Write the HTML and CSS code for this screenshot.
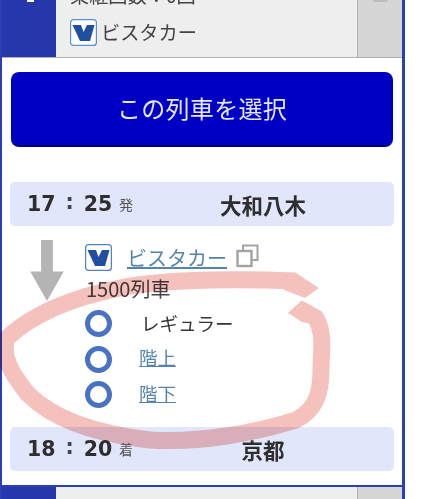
FILE: index.html
```html
<!DOCTYPE html>
<html lang="ja">
<head>
<meta charset="utf-8">
<title>列車の選択</title>
<link rel="stylesheet" href="styles.css">
</head>
<body>
<div class="frame">
  <div class="summary">
    <div class="num"><span class="num-mark"></span></div>
    <div class="info">
      <div class="info-line count">乗継回数：0回</div>
      <div class="info-line kind">
        <svg class="vista" viewBox="0 0 27 27"><rect x=".6" y=".6" width="25.8" height="25.8" rx="3" fill="#fff" stroke="#5b8fc9" stroke-width="1.2"/><path d="M2.5 6H24.5L20 22H10Z" fill="#1f4f9e"/><path d="M11 6H17L13.5 13Z" fill="#fff"/></svg>
        <span>ビスタカー</span>
      </div>
    </div>
    <div class="side"><span class="side-mark"></span></div>
  </div>
  <div class="select-wrap"><button class="select">この列車を選択</button></div>
  <div class="stop first">
    <span class="time">17<i>:</i>25</span><span class="dep">発</span><span class="station">大和八木</span>
  </div>
  <div class="leg">
    <div class="arrow-col">
      <svg class="arrow" viewBox="0 0 34 62"><path d="M11 0H23V32H34L17 62L0 32H11Z" fill="#b4b4b4"/></svg>
    </div>
    <div class="leg-body">
      <div class="train">
        <svg class="vista" viewBox="0 0 27 27"><rect x=".6" y=".6" width="25.8" height="25.8" rx="3" fill="#fff" stroke="#4f82c4" stroke-width="1.2"/><path d="M2.5 6H24.5L20 22H10Z" fill="#1f4f9e"/><path d="M11 6H17L13.5 13Z" fill="#fff"/></svg>
        <a class="train-link" href="#">ビスタカー</a>
        <svg class="copy" viewBox="0 0 23 24"><path d="M7 6V1.5H21.5V16H16" fill="none" stroke="#a3a3a3" stroke-width="2"/><rect x="1.5" y="7" width="14" height="15" fill="none" stroke="#a3a3a3" stroke-width="2.4"/></svg>
      </div>
      <div class="train-no">1500列車</div>
      <div class="seat"><span class="radio"></span><span class="seat-plain">レギュラー</span></div>
      <div class="seat"><span class="radio"></span><a class="seat-link" href="#">階上</a></div>
      <div class="seat"><span class="radio"></span><a class="seat-link" href="#">階下</a></div>
    </div>
  </div>
  <div class="stop last">
    <span class="time">18<i>:</i>20</span><span class="dep">着</span><span class="station">京都</span>
  </div>
</div>
<div class="next">
  <div class="num"></div>
  <div class="info"></div>
  <div class="side"></div>
</div>
<svg class="scribble" viewBox="0 0 426 499" width="426" height="499">
  <path d="M296 281C250 279 170 278 120 288C75 297 35 312 7 338C1 355 10 372 28 394C52 418 90 433 150 440C200 443 255 433 296 420C315 410 321 395 321 370C321 350 325 335 316 318L298 308" fill="none" stroke="#f0aca6" stroke-width="17" stroke-linecap="butt" stroke-linejoin="round"/>
  <path d="M286 273L296 273L319 288L305 298L284 290Z" fill="#f0aca6"/>
  <path d="M288 313L301 301L316 310L320 325L302 322Z" fill="#f0aca6"/>
</svg>
</body>
</html>
```
FILE: styles.css
```css
* { box-sizing: border-box; }
html, body { margin: 0; padding: 0; height: 499px; overflow: hidden; background: #fff; }
body {
  position: relative;
  width: 426px;
  font-family: "Noto Sans CJK JP", "Noto Sans", sans-serif;
  color: #333;
}
.frame {
  width: 405px;
  height: 487px;
  border-left: 2px solid #2a3fb5;
  border-right: 3px solid #2a3fb5;
  border-bottom: 2px solid #2a3fb5;
}
.summary {
  display: flex;
  height: 58px;
  border-bottom: 1px solid #b0b0b0;
}
.num {
  position: relative;
  width: 54px;
  background: #2738ad;
  flex: none;
}
.num-mark {
  display: block;
  width: 7px;
  height: 2px;
  margin-left: 25px;
  background: #fff;
}
.info {
  flex: 1;
  background: #eee;
  border-right: 1px solid #b0b0b0;
  display: flex;
  flex-direction: column;
  justify-content: flex-end;
  padding: 0 0 9px 14px;
  overflow: hidden;
}
.info-line {
  font-size: 19.2px;
  line-height: 34px;
  flex: none;
  white-space: nowrap;
  color: #444;
}
.count { margin-bottom: 4px; }
.kind { display: flex; align-items: center; gap: 4px; height: 32px; }
.side { width: 44px; flex: none; background: #d6d6d6; }
.side-mark {
  display: block;
  width: 15px;
  height: 2px;
  margin: 0 0 0 15px;
  background: #bdbdbd;
  border-radius: 0 0 8px 8px;
}
.vista { width: 27px; height: 27px; flex: none; }
.select-wrap { padding: 14px 9px 35px; }
.select {
  display: block;
  width: 382px;
  height: 75px;
  padding: 0 0 2px;
  border: 0;
  border-bottom: 2px solid #00007a;
  border-radius: 8px;
  background: #0000c4;
  color: #e6e6ff;
  font: 400 24px/1 "Noto Sans CJK JP", sans-serif;
  letter-spacing: .3px;
}
.stop {
  display: flex;
  align-items: center;
  width: 384px;
  height: 44px;
  margin-left: 8px;
  padding-left: 17px;
  background: #e1e6fb;
  border-radius: 5px;
  color: #2e2e2e;
}
.time {
  width: 83px;
  font: 700 20.5px/1 "DejaVu Sans", sans-serif;
  white-space: nowrap;
}
.time i { font-style: normal; margin: 0 10px; position: relative; top: -2px; color: #444; }
.dep { font-size: 14px; width: 109px; padding-left: 9px; color: #555; flex: none; }
.station {
  font-size: 21.5px;
  font-weight: 700;
  width: 88px;
  text-align: center;
  white-space: nowrap;
}
.leg {
  display: flex;
  height: 201px;
  padding-top: 14px;
}
.arrow-col { width: 83px; padding: 0 0 0 28px; flex: none; }
.arrow { display: block; width: 34px; height: 61px; }
.leg-body { flex: 1; }
.train { display: flex; align-items: center; height: 27px; margin-top: 4px; }
.train-link {
  margin-left: 15px;
  width: 102px;
  font-size: 20px;
  line-height: 27px;
  color: #5583ab;
  text-decoration: underline;
  text-underline-offset: 1px;
  white-space: nowrap;
}
.copy { width: 23px; height: 24px; margin: -3px 0 0 7px; }
.train-no { font-size: 20px; line-height: 36px; margin-left: 1px; color: #444; height: 35px; }
.seat { display: flex; align-items: center; height: 35.5px; }
.radio {
  width: 27px;
  height: 27px;
  flex: none;
  border: 5px solid #4a72c4;
  border-radius: 50%;
  background: #fff;
}
.seat-plain { margin-left: 29px; font-size: 18.5px; color: #333; padding-bottom: 2px; }
.seat-link {
  margin-left: 27px;
  margin-bottom: 4px;
  font-size: 18.5px;
  color: #5583ab;
  text-decoration: underline;
  text-underline-offset: 1px;
}
.next { display: flex; width: 405px; height: 12px; border-left: 2px solid #2a3fb5; border-right: 3px solid #2a3fb5; }
.next .info { padding: 0; }
.scribble {
  position: absolute;
  left: 0;
  top: 0;
  mix-blend-mode: multiply;
  opacity: .75;
  filter: blur(.6px);
  pointer-events: none;
}
```
